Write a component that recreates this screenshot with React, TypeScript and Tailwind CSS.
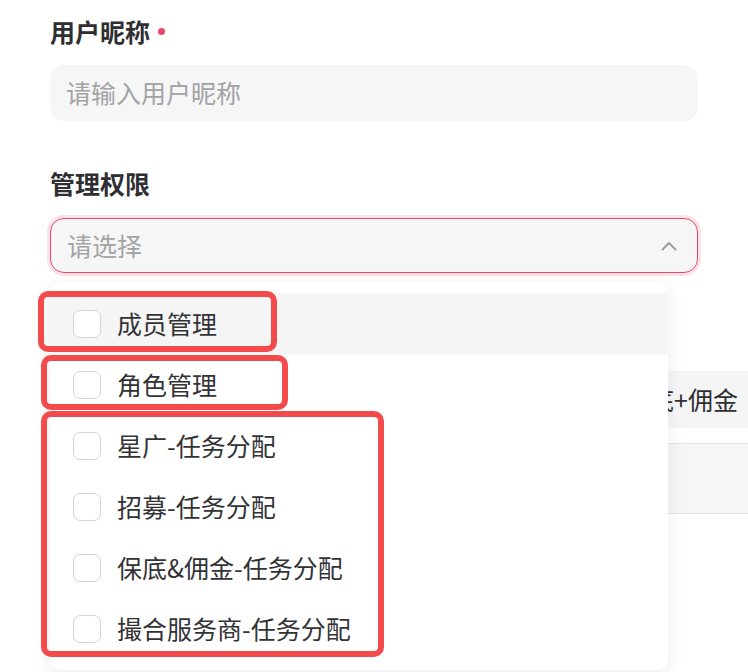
import React from 'react';

const options = [
  '成员管理',
  '角色管理',
  '星广-任务分配',
  '招募-任务分配',
  '保底&佣金-任务分配',
  '撮合服务商-任务分配',
];

function ChevronUp() {
  return (
    <svg width="16" height="10" viewBox="0 0 16 10" fill="none" className="text-[#9a9a9a]">
      <path d="M1.5 8.5L8 2L14.5 8.5" stroke="currentColor" strokeWidth="1.8" strokeLinecap="round" strokeLinejoin="round" />
    </svg>
  );
}

export default function App() {
  return (
    <div
      className="relative w-[748px] h-[672px] overflow-hidden bg-white text-[#2f2f33]"
      style={{ fontFamily: '"Noto Sans CJK SC", "Noto Sans", sans-serif' }}
    >
      <div className="px-[50px] pt-[14px]">
        <div className="flex items-center h-[34px]">
          <span className="text-[25px] font-bold leading-[34px]">用户昵称</span>
          <span className="ml-[8px] w-[7px] h-[7px] rounded-full bg-[#e8466d]" />
        </div>
        <div className="mt-[17px] h-[56px] rounded-[14px] bg-[#f6f6f6] px-[16px] flex items-center">
          <span className="text-[25px] text-[#a3a3a6]">请输入用户昵称</span>
        </div>

        <div className="mt-[45px] flex items-center h-[34px]">
          <span className="text-[25px] font-bold leading-[34px]">管理权限</span>
        </div>
        <div className="mt-[18px] h-[55px] rounded-[14px] bg-[#f6f6f6] border border-[#e5496c] shadow-[0_0_0_3px_#fde1e7] px-[16px] flex items-center justify-between">
          <span className="text-[25px] text-[#a3a3a6]">请选择</span>
          <span className="mr-[4px]">
            <ChevronUp />
          </span>
        </div>

        <div className="relative mt-[9px]">
          {/* content underneath the dropdown */}
          <div className="-mr-[50px]">
            <div className="h-[89px]" />
            <div className="h-[57px] bg-[#f5f5f5] flex items-center justify-end pr-[10px]">
              <span className="text-[25px]">保底+佣金</span>
            </div>
            <div className="mt-[15px] h-[71px] bg-[#f6f6f6] border-y border-[#e3e3e3]" />
          </div>

          {/* dropdown panel */}
          <div className="absolute left-0 top-0 w-[618px] rounded-[12px] bg-white py-[11px] shadow-[0_4px_18px_rgba(0,0,0,0.08)]">
            {options.map((label, i) => (
              <div
                key={label}
                className={
                  'h-[61px] flex items-center pl-[23px] ' + (i === 0 ? 'bg-[#f5f5f5]' : '')
                }
              >
                <span className="w-[28px] h-[28px] rounded-[7px] border border-[#d3d3d6] bg-white" />
                <span className="ml-[16px] text-[25px] text-[#333336]">{label}</span>
              </div>
            ))}
          </div>
        </div>
      </div>

      {/* annotation frames */}
      <div className="absolute left-[38px] top-[291px] w-[239px] h-[61px] rounded-[10px] border-[6px] border-[#f34b4b]" />
      <div className="absolute left-[41px] top-[355px] w-[247px] h-[55px] rounded-[10px] border-[6px] border-[#f34b4b]" />
      <div className="absolute left-[41px] top-[411px] w-[343px] h-[246px] rounded-[10px] border-[6px] border-[#f34b4b]" />
    </div>
  );
}
